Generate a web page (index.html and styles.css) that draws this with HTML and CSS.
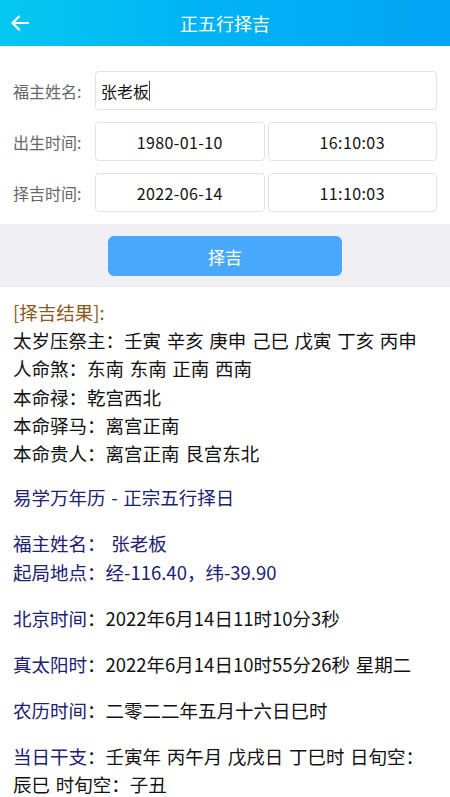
FILE: index.html
```html
<!DOCTYPE html>
<html lang="zh-CN">
<head>
    <meta charset="UTF-8">
    <meta name="viewport" content="width=device-width, initial-scale=1.0">
    <title>正五行择吉</title>
    <link rel="stylesheet" href="styles.css">
</head>
<body>
    <header class="topbar">
        <svg class="back" width="22" height="22" viewBox="0 0 22 22" aria-hidden="true">
            <path d="M19 11H4M10 4.5L3.5 11 10 17.5" fill="none" stroke="#fff" stroke-width="2.2" stroke-linecap="round" stroke-linejoin="round"/>
        </svg>
        <h1>正五行择吉</h1>
    </header>

    <div class="form">
        <div class="row">
            <span class="label">福主姓名:</span>
            <div class="field name">张老板<span class="caret"></span></div>
        </div>
        <div class="row">
            <span class="label">出生时间:</span>
            <div class="field">1980-01-10</div>
            <div class="field">16:10:03</div>
        </div>
        <div class="row">
            <span class="label">择吉时间:</span>
            <div class="field">2022-06-14</div>
            <div class="field">11:10:03</div>
        </div>
    </div>

    <div class="action">
        <button>择吉</button>
    </div>

    <div class="result">
        <p class="title">[择吉结果]:</p>
        <p>太岁压祭主：壬寅 辛亥 庚申 己巳 戊寅 丁亥 丙申</p>
        <p>人命煞：东南 东南 正南 西南</p>
        <p>本命禄：乾宫西北</p>
        <p>本命驿马：离宫正南</p>
        <p>本命贵人：离宫正南 艮宫东北</p>
    </div>

    <div class="info">
        <p class="navy">易学万年历 - 正宗五行择日</p>
        <p class="navy">福主姓名：&nbsp;张老板<br>起局地点：经-116.40，纬-39.90</p>
        <p><span class="navy">北京时间</span>：2022年6月14日11时10分3秒</p>
        <p><span class="navy">真太阳时</span>：2022年6月14日10时55分26秒 星期二</p>
        <p><span class="navy">农历时间</span>：二零二二年五月十六日巳时</p>
        <p><span class="navy">当日干支</span>：壬寅年 丙午月 戊戌日 丁巳时 日旬空：辰巳 时旬空：子丑</p>
    </div>
</body>
</html>
```

FILE: styles.css
```css
body {
    margin: 0;
    background: #fff;
    font-family: "Noto Sans CJK SC", "Noto Sans", sans-serif;
    color: #111;
}
.topbar {
    position: relative;
    height: 46px;
    display: flex;
    align-items: center;
    justify-content: center;
    background: linear-gradient(90deg, #05c8f2 0%, #01b3f5 45%, #03a5f5 100%);
}
.back {
    position: absolute;
    left: 9px;
    top: 12px;
}
.topbar h1 {
    margin: 0;
    font-size: 18px;
    font-weight: 400;
    color: #fff;
}
.form {
    padding: 25px 13px 12px 13px;
    display: flex;
    flex-direction: column;
    gap: 12px;
}
.row {
    display: flex;
    align-items: center;
    gap: 3px;
}
.label {
    width: 79px;
    font-size: 16px;
    color: #666;
}
.field {
    flex: 1;
    height: 37px;
    border: 1px solid #e2e2e2;
    border-radius: 4px;
    display: flex;
    align-items: center;
    justify-content: center;
    font-size: 16px;
    letter-spacing: 0.4px;
    color: #111;
}
.field.name {
    justify-content: flex-start;
    padding-left: 5px;
    letter-spacing: 0;
}
.caret {
    display: inline-block;
    width: 1px;
    height: 20px;
    background: #444;
}
.action {
    background: #efeff4;
    padding: 12px 0 11px;
    display: flex;
    justify-content: center;
}
.action button {
    width: 234px;
    height: 40px;
    border: none;
    border-radius: 6px;
    background: #48a8fc;
    color: #fff;
    font-family: inherit;
    font-size: 17px;
}
.result {
    padding: 11px 13px 0;
    font-size: 18.5px;
    line-height: 28.2px;
    word-spacing: 1.5px;
}
.result p {
    margin: 0;
}
.result .title {
    color: #8b5a1b;
}
.info {
    padding: 16px 22px 0 13px;
    font-size: 18.5px;
    line-height: 28.5px;
    word-spacing: 1.5px;
}
.info p {
    margin: 0 0 17.5px;
}
.navy {
    color: #202070;
}
```
